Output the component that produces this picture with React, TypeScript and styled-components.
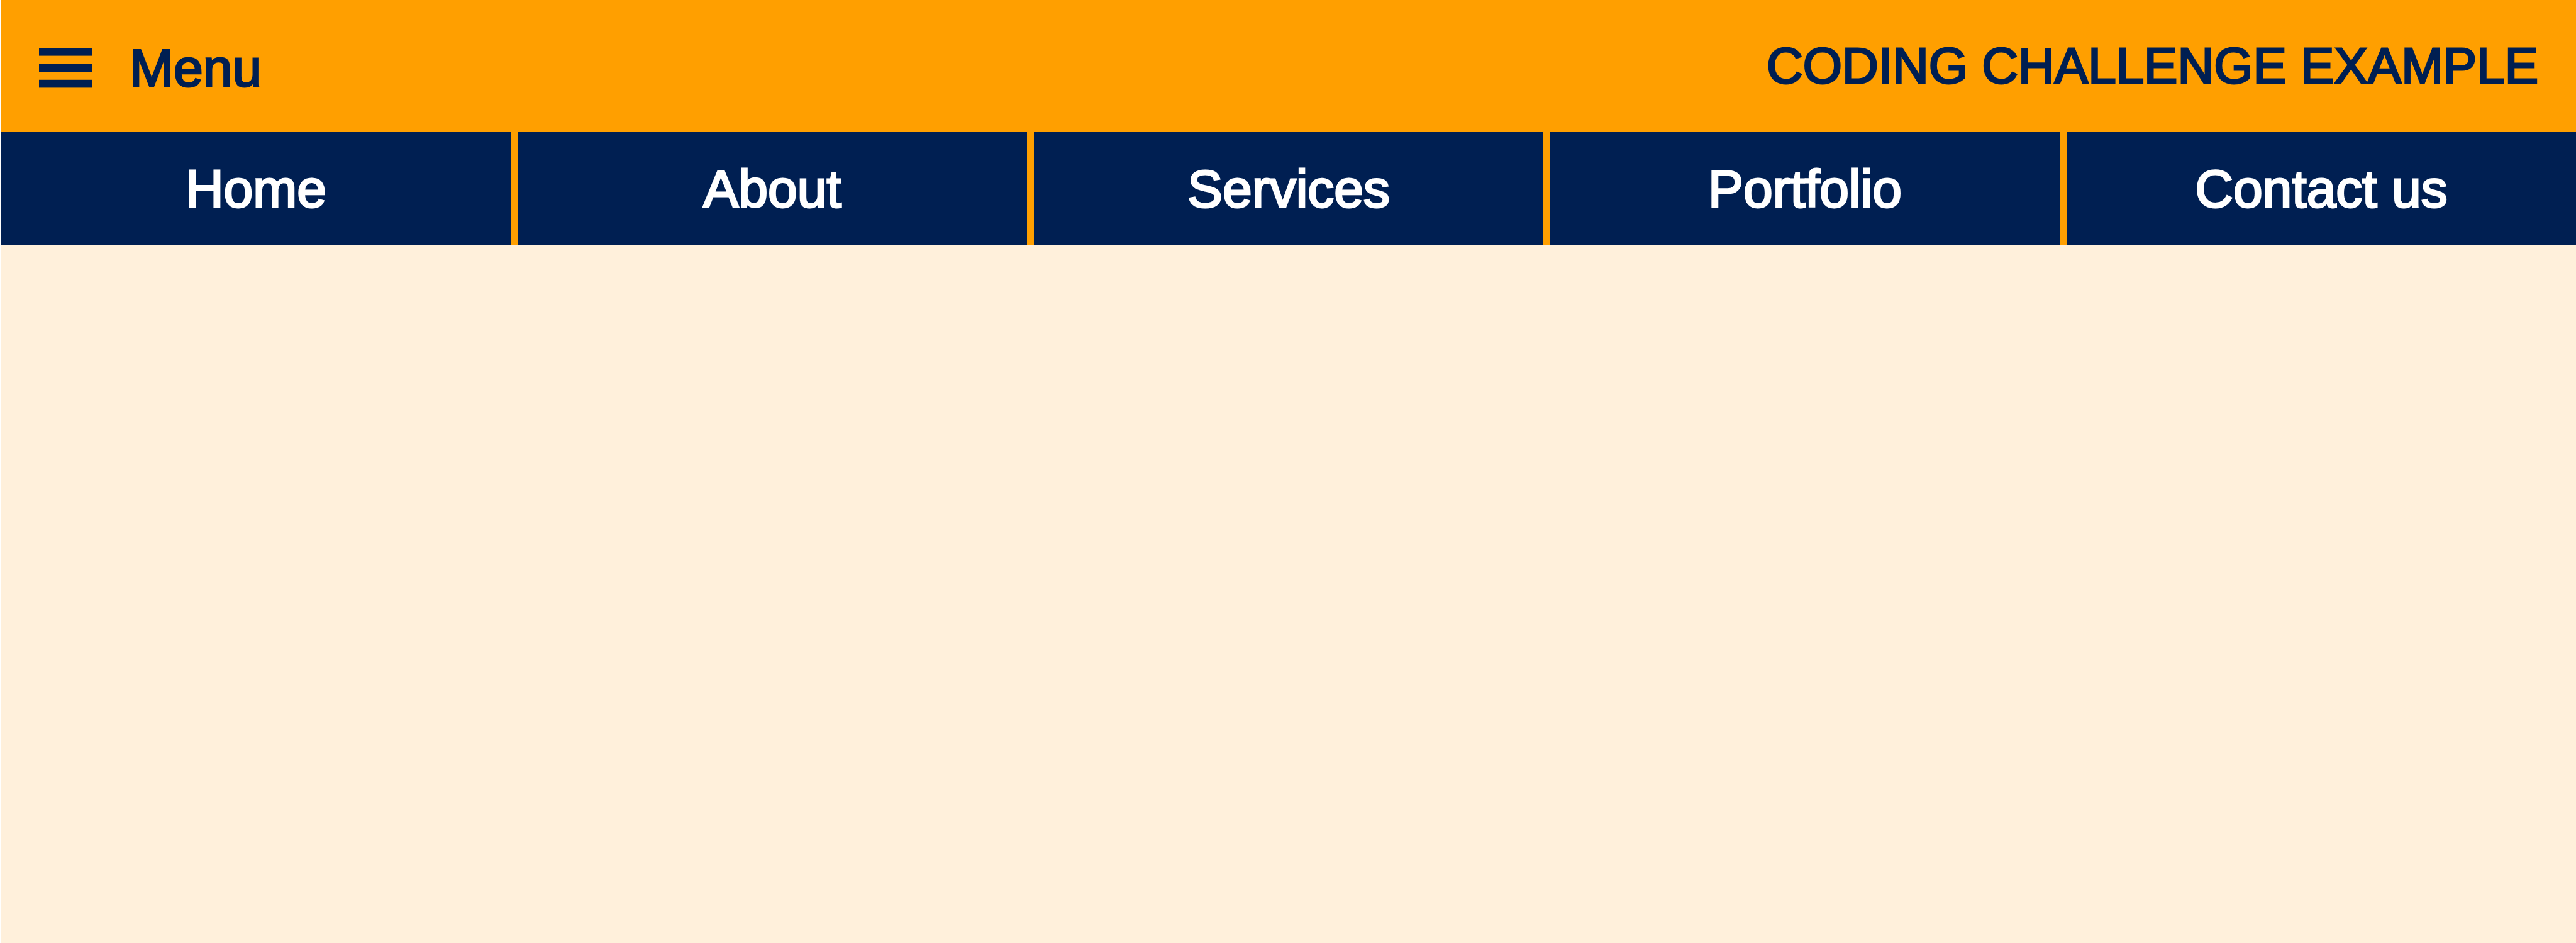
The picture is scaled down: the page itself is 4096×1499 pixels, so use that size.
import React from "react";
import styled, { createGlobalStyle } from "styled-components";

const GlobalStyle = createGlobalStyle`
  * { box-sizing: border-box; }
  body { margin: 0; background: #fff0db; font-family: "Liberation Sans", Arial, Helvetica, sans-serif; }
`;

const Page = styled.div`
  min-height: 100vh;
  border-left: 2px solid #ffffff;
  background: #fff0db;
`;

const Header = styled.header`
  display: flex;
  align-items: center;
  justify-content: space-between;
  padding: 54px 60px;
  background: #ff9f00;
  color: #001f52;
`;

const MenuButton = styled.button`
  display: flex;
  align-items: center;
  gap: 60px;
  padding: 6px 0 0;
  border: 0;
  background: none;
  color: inherit;
  font: 500 84px/96px "Liberation Sans", Arial, sans-serif;
  -webkit-text-stroke: 3px currentColor;
  cursor: pointer;
`;

const Title = styled.h1`
  margin: 0;
  font-size: 80px;
  line-height: 96px;
  font-weight: 500;
  -webkit-text-stroke: 3px currentColor;
`;

const Nav = styled.nav`
  display: grid;
  grid-template-columns: repeat(5, 1fr);
  gap: 11px;
  background: #ff9f00;
`;

const NavLink = styled.a`
  padding: 42px 0;
  background: #001f52;
  color: #ffffff;
  font-size: 84px;
  line-height: 96px;
  font-weight: 500;
  text-align: center;
  text-decoration: none;
  -webkit-text-stroke: 3px currentColor;
`;

const links = ["Home", "About", "Services", "Portfolio", "Contact us"];

export default function App() {
  return (
    <Page>
      <GlobalStyle />
      <Header>
        <MenuButton type="button">
          <svg width="84" height="64" viewBox="0 0 84 64" fill="currentColor" stroke="none" aria-hidden="true">
            <rect width="84" height="12.6" />
            <rect y="25.6" width="84" height="12.4" />
            <rect y="50.8" width="84" height="12.6" />
          </svg>
          Menu
        </MenuButton>
        <Title>CODING CHALLENGE EXAMPLE</Title>
      </Header>
      <Nav>
        {links.map((label) => (
          <NavLink key={label} href="#">{label}</NavLink>
        ))}
      </Nav>
    </Page>
  );
}
